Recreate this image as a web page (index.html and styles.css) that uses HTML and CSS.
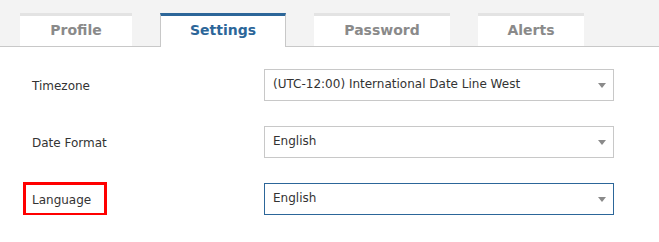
FILE: index.html
```html
<!DOCTYPE html>
<html>
<head>
<meta charset="utf-8">
<link rel="stylesheet" href="styles.css">
</head>
<body>
<div class="tabs">
  <div class="tab tab-profile">Profile</div>
  <div class="tab tab-settings active">Settings</div>
  <div class="tab tab-password">Password</div>
  <div class="tab tab-alerts">Alerts</div>
</div>
<div class="form">
  <div class="label"><span>Timezone</span></div>
  <div class="select"><span>(UTC-12:00) International Date Line West</span><svg class="arrow" width="8" height="5" viewBox="0 0 8 5"><path d="M0 0H8L4 5Z"/></svg></div>
  <div class="label"><span>Date Format</span></div>
  <div class="select"><span>English</span><svg class="arrow" width="8" height="5" viewBox="0 0 8 5"><path d="M0 0H8L4 5Z"/></svg></div>
  <div class="label"><span class="marked">Language</span></div>
  <div class="select focus"><span>English</span><svg class="arrow" width="8" height="5" viewBox="0 0 8 5"><path d="M0 0H8L4 5Z"/></svg></div>
</div>
</body>
</html>
```
FILE: styles.css
```css
html, body {
  margin: 0;
  padding: 0;
  background: #fff;
  font-family: "DejaVu Sans", Verdana, sans-serif;
}
.tabs {
  display: flex;
  gap: 28px;
  padding: 13px 0 0 20px;
  height: 33px;
  background: #f3f3f3;
  border-bottom: 1px solid #c8c8c8;
}
.tab {
  box-sizing: border-box;
  height: 33px;
  border-top: 3px solid #e3e3e3;
  background: #fff;
  color: #8a8a8a;
  font-weight: bold;
  font-size: 14px;
  line-height: 28px;
  text-align: center;
  white-space: nowrap;
}
.tab-profile { width: 112px; }
.tab-settings { width: 126px; }
.tab-password { width: 136px; }
.tab-alerts { width: 106px; }
.tab.active {
  border-top-color: #2c6699;
  border-left: 1px solid #c8c8c8;
  border-right: 1px solid #c8c8c8;
  height: 34px;
  margin-bottom: -1px;
  color: #2c6699;
}
.form {
  display: grid;
  grid-template-columns: 238px 350px;
  row-gap: 25px;
  align-items: center;
  padding: 22px 0 0 26px;
  font-size: 12px;
  color: #333;
}
.label span {
  display: inline-block;
  padding: 0 6px;
  height: 28px;
  line-height: 30px;
}
.label span.marked {
  box-sizing: border-box;
  width: 78px;
  outline: 3px solid #f00;
  outline-offset: 0;
}
.select {
  height: 30px;
  border: 1px solid #c8c8c8;
  display: flex;
  align-items: center;
  justify-content: space-between;
  padding: 0 7px 0 8px;
  line-height: 30px;
}
.select span {
  position: relative;
  top: -1px;
}
.select.focus {
  border-color: #2c6699;
}
.arrow {
  fill: #8a8a8a;
}
```
